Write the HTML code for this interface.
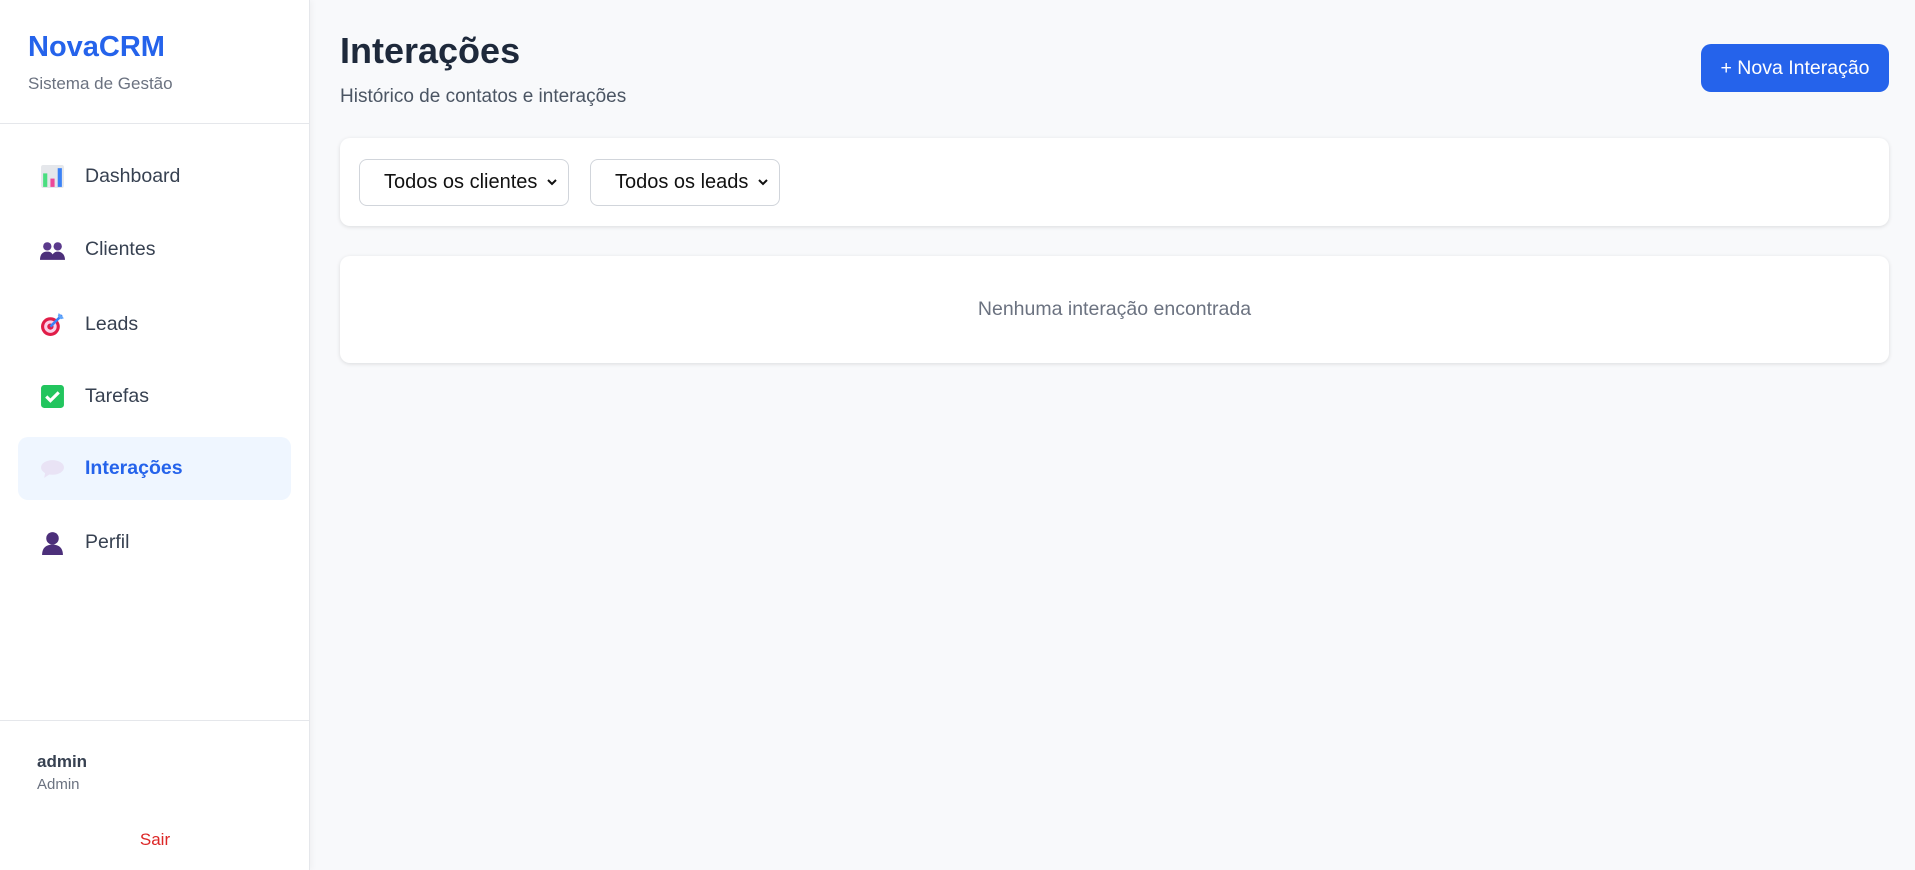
<!DOCTYPE html>
<html><head><meta charset="utf-8"><style>
*{box-sizing:border-box;margin:0;padding:0}
body{width:1915px;height:870px;overflow:hidden;background:#f8f9fb;font-family:"Liberation Sans",sans-serif;position:relative}
.sb{position:absolute;left:0;top:0;width:310px;height:870px;background:#fff;border-right:1px solid #e5e7eb;box-shadow:2px 0 6px rgba(0,0,0,.04)}
.logo{position:absolute;left:28px;top:31px;font-size:29px;font-weight:bold;color:#2563eb}
.sub{position:absolute;left:28px;top:74px;font-size:17px;color:#6b7280}
.hr{position:absolute;left:0;width:310px;height:1px;background:#e5e7eb}
.nav{position:absolute;left:18px;width:273px;height:63px;border-radius:10px;display:flex;align-items:center;font-size:19.5px;color:#374151}
.nav svg{position:absolute;left:22px;width:25px;height:25px}
.nav span{position:absolute;left:67px}
.nav.act{background:#eff6ff;color:#2563eb;font-weight:bold}
h1{position:absolute;left:340px;top:30px;font-size:36px;color:#1e293b}
.desc{position:absolute;left:340px;top:86px;font-size:19px;color:#4b5563}
.btn{position:absolute;left:1701px;top:44px;width:188px;height:48px;background:#2563eb;color:#fff;border-radius:10px;font-size:19.5px;display:flex;align-items:center;justify-content:center}
.card{position:absolute;left:340px;width:1549px;background:#fff;border-radius:10px;box-shadow:0 1px 4px rgba(0,0,0,.12)}
.sel{position:absolute;top:21px;height:47px;border:1px solid #d1d5db;border-radius:8px;font-size:20px;color:#111;display:flex;align-items:center;padding-left:24px}
.sel svg{position:absolute;right:10px;top:18px}
</style></head><body>
<div class="sb">
<div class="logo">NovaCRM</div>
<div class="sub">Sistema de Gestão</div>
<div class="hr" style="top:123px"></div>
<div class="nav" style="top:145px"><svg viewBox="0 0 24 24"><rect x="1" y="1" width="22" height="22" rx="2" fill="#e5e7eb"/><rect x="3" y="9" width="4" height="13" fill="#4ade80"/><rect x="10" y="14" width="4" height="8" fill="#ec4899"/><rect x="17" y="4" width="4" height="18" fill="#3b82f6"/></svg><span>Dashboard</span></div>
<div class="nav" style="top:218px"><svg viewBox="0 0 24 24"><circle cx="7" cy="9" r="4" fill="#5b3a8c"/><circle cx="17" cy="9" r="4" fill="#5b3a8c"/><path d="M0 22c0-6 3-8 7-8s6 2 6 8zM11 22c0-6 3-8 6-8s7 2 7 8z" fill="#4c2f7a"/></svg><span>Clientes</span></div>
<div class="nav" style="top:293px"><svg viewBox="0 0 24 24"><circle cx="10" cy="14" r="9" fill="#e11d48"/><circle cx="10" cy="14" r="6" fill="#fbcfe8"/><circle cx="10" cy="14" r="3" fill="#e11d48"/><path d="M10 14L21 3" stroke="#3b82f6" stroke-width="2.5"/><path d="M18 1l5 5-3 1-3-3z" fill="#60a5fa"/></svg><span>Leads</span></div>
<div class="nav" style="top:365px"><svg viewBox="0 0 24 24"><rect x="1" y="1" width="22" height="22" rx="3" fill="#22c55e"/><path d="M6 12l4 4 8-8" stroke="#fff" stroke-width="3" fill="none"/></svg><span>Tarefas</span></div>
<div class="nav act" style="top:437px"><svg viewBox="0 0 24 24"><ellipse cx="12" cy="11" rx="11" ry="7" fill="#e9e3f5"/><path d="M5 16l-1 5 6-4z" fill="#e9e3f5"/></svg><span>Interações</span></div>
<div class="nav" style="top:511px"><svg viewBox="0 0 24 24"><circle cx="12" cy="8" r="6" fill="#4c2f7a"/><path d="M2 24c0-7 4-10 10-10s10 3 10 10z" fill="#4c2f7a"/></svg><span>Perfil</span></div>
<div class="hr" style="top:720px"></div>
<div style="position:absolute;left:37px;top:752px;font-size:17px;font-weight:bold;color:#374151">admin</div>
<div style="position:absolute;left:37px;top:776px;font-size:15px;color:#6b7280">Admin</div>
<div style="position:absolute;left:0;width:310px;text-align:center;top:830px;font-size:17px;color:#dc2626">Sair</div>
</div>
<h1>Interações</h1>
<div class="desc">Histórico de contatos e interações</div>
<div class="btn">+ Nova Interação</div>
<div class="card" style="top:138px;height:88px">
<div class="sel" style="left:19px;width:210px">Todos os clientes<svg width="12" height="8" viewBox="0 0 12 8"><path d="M2 2l4 4 4-4" stroke="#111" stroke-width="2" fill="none"/></svg></div>
<div class="sel" style="left:250px;width:190px">Todos os leads<svg width="12" height="8" viewBox="0 0 12 8"><path d="M2 2l4 4 4-4" stroke="#111" stroke-width="2" fill="none"/></svg></div>
</div>
<div class="card" style="top:256px;height:107px;display:flex;align-items:center;justify-content:center;font-size:19.5px;color:#6b7280">Nenhuma interação encontrada</div>
</body></html>
